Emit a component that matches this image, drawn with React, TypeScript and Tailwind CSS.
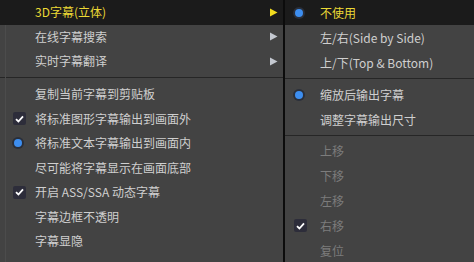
import React from "react";

const font = { fontFamily: '"Noto Sans CJK SC", "Noto Sans", sans-serif' };

function Check() {
  return (
    <span className="flex h-[13px] w-[13px] items-center justify-center rounded-[2px] bg-[#2d2d3a]">
      <svg width="9" height="8" viewBox="0 0 9 8">
        <path d="M1 4.2 L3.4 6.5 L8 1.3" stroke="#fff" strokeWidth="1.8" fill="none" />
      </svg>
    </span>
  );
}

function Radio() {
  return (
    <span className="flex h-[12px] w-[12px] items-center justify-center rounded-full bg-[#2a2f3a]">
      <span className="h-[8px] w-[8px] rounded-full bg-[#3d8ef0]" />
    </span>
  );
}

function Arrow({ active }: { active?: boolean }) {
  return (
    <svg width="9" height="9" viewBox="0 0 9 9">
      <path d="M1 0.5 L8.5 4.5 L1 8.5 Z" fill={active ? "#f2dc1e" : "#c4c8d0"} />
    </svg>
  );
}

type Item = {
  label: string;
  mark?: "check" | "radio";
  arrow?: boolean;
  active?: boolean;
  disabled?: boolean;
};

function Row({ item, h, iconX }: { item: Item; h: string; iconX: string }) {
  return (
    <div
      className={`relative flex items-center ${h} ${item.active ? "bg-[#1b1b1b]" : ""}`}
    >
      <div className={`flex w-[35px] items-center ${iconX}`}>
        {item.mark === "check" && <Check />}
        {item.mark === "radio" && <Radio />}
      </div>
      <span
        className={`flex-1 whitespace-nowrap text-[12px] leading-none ${
          item.active ? "text-[#ecd935]" : item.disabled ? "text-[#7c7c7c]" : "text-[#cfcfcf]"
        }`}
      >
        {item.label}
      </span>
      {item.arrow && (
        <div className="mr-[5px] flex items-center">
          <Arrow active={item.active} />
        </div>
      )}
    </div>
  );
}

function Sep({ h }: { h: string }) {
  return (
    <div className={`flex items-center ${h}`}>
      <div className="h-px w-full bg-[#262626]" />
    </div>
  );
}

export default function App() {
  const left1: Item[] = [
    { label: "3D字幕(立体)", arrow: true, active: true },
    { label: "在线字幕搜索", arrow: true },
    { label: "实时字幕翻译", arrow: true },
  ];
  const left2: Item[] = [
    { label: "复制当前字幕到剪贴板" },
    { label: "将标准图形字幕输出到画面外", mark: "check" },
    { label: "将标准文本字幕输出到画面内", mark: "radio" },
    { label: "尽可能将字幕显示在画面底部" },
    { label: "开启 ASS/SSA 动态字幕", mark: "check" },
    { label: "字幕边框不透明" },
    { label: "字幕显隐" },
  ];
  const r1: Item[] = [
    { label: "不使用", mark: "radio", active: true },
    { label: "左/右(Side by Side)" },
    { label: "上/下(Top & Bottom)" },
  ];
  const r2: Item[] = [
    { label: "缩放后输出字幕", mark: "radio" },
    { label: "调整字幕输出尺寸" },
  ];
  const r3: Item[] = [
    { label: "上移", disabled: true },
    { label: "下移", disabled: true },
    { label: "左移", disabled: true },
    { label: "右移", disabled: true, mark: "check" },
    { label: "复位", disabled: true },
  ];

  return (
    <div className="flex h-[262px] w-[474px] overflow-hidden bg-[#434343]" style={font}>
      <div className="relative flex w-[283px] flex-col">
        <div className="absolute left-[5px] top-[24px] bottom-0 w-px bg-[#4c4c4c]" />
        {left1.map((it) => (
          <Row key={it.label} item={it} h="h-[24.5px]" iconX="pl-[13px]" />
        ))}
        <Sep h="h-[8.5px]" />
        {left2.map((it) => (
          <Row
            key={it.label}
            item={it}
            h="h-[24.5px]"
            iconX={it.mark === "radio" ? "pl-[12px]" : "pl-[13px]"}
          />
        ))}
      </div>
      <div className="w-[2px] shrink-0 bg-[#0c0c0c]" />
      <div className="flex flex-1 flex-col">
        {r1.map((it) => (
          <Row key={it.label} item={it} h="h-[25px] shrink-0" iconX="pl-[8px]" />
        ))}
        <Sep h="h-[7px] shrink-0" />
        {r2.map((it) => (
          <Row key={it.label} item={it} h="h-[25px] shrink-0" iconX="pl-[8px]" />
        ))}
        <Sep h="h-[6px] shrink-0" />
        {r3.map((it) => (
          <Row
            key={it.label}
            item={it}
            h="h-[25px] shrink-0"
            iconX={it.mark === "check" ? "pl-[9px]" : "pl-[8px]"}
          />
        ))}
      </div>
    </div>
  );
}
